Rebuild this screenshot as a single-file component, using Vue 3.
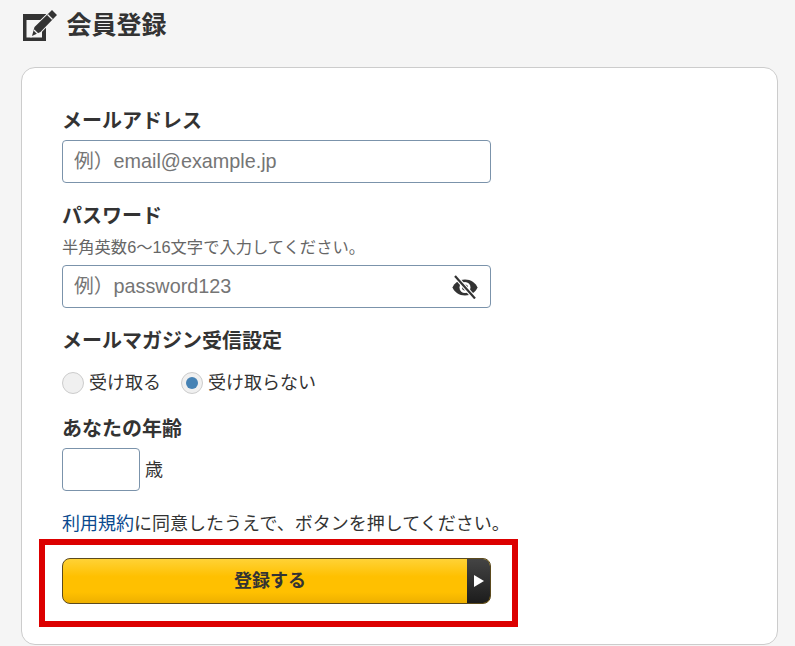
<template>
  <div class="page">
    <!-- タイトル -->
    <h1 class="title">
      <svg class="title-icon" width="36" height="32" viewBox="0 0 36 32">
        <path fill-rule="evenodd" d="M2 5H25V32H2zM5.500 11V28.500H21V11z" fill="#333" />
        <path d="M11 27 13.500 18 29 3 31 1 36 6 34 8 19.500 23z" fill="#333" stroke="#f5f5f5" stroke-width="2" paint-order="stroke" />
        <path d="M13 21 17 25" stroke="#f5f5f5" stroke-width="1.200" />
        <path d="M26.500 5.500 31.500 10.500" stroke="#f5f5f5" stroke-width="1.200" />
      </svg>
      会員登録
    </h1>

    <form class="card" @submit.prevent>
      <div class="field">
        <label class="label" for="email">メールアドレス</label>
        <input id="email" class="input" type="text" placeholder="例）email@example.jp" />
      </div>

      <div class="field">
        <label class="label" for="password">パスワード</label>
        <p class="hint">半角英数6〜16文字で入力してください。</p>
        <div class="password-wrap">
          <input id="password" class="input" type="text" placeholder="例）password123" />
          <svg class="eye" width="28" height="24" viewBox="0 0 28 24">
            <path d="M14 4.500C8 4.500 3.500 8 1.500 12.500 3.500 17 8 20.500 14 20.500S24.500 17 26.500 12.500C24.500 8 20 4.500 14 4.500z" fill="#333" />
            <circle cx="14" cy="12.500" r="5.500" fill="#fff" />
            <circle cx="14" cy="12.500" r="3" fill="#333" />
            <path d="M4.500 1.500 23.500 23" stroke="#fff" stroke-width="4.500" />
            <path d="M4 1 24 23.500" stroke="#333" stroke-width="2.200" />
          </svg>
        </div>
      </div>

      <div class="field radio-field">
        <span class="label">メールマガジン受信設定</span>
        <div class="radios">
          <label class="radio" v-for="option in options" :key="option">
            <span class="radio-dot" :class="{ checked: option === mailmag }"></span>
            {{ option }}
          </label>
        </div>
      </div>

      <div class="field">
        <label class="label" for="age">あなたの年齢</label>
        <div class="age-row">
          <input id="age" class="input age" type="text" />
          <span class="age-unit">歳</span>
        </div>
      </div>

      <p class="agree"><a href="#">利用規約</a>に同意したうえで、ボタンを押してください。</p>

      <!-- 登録ボタン -->
      <div class="submit-wrap">
        <button type="submit" class="submit">
          登録する
          <span class="submit-arrow"></span>
        </button>
        <div class="highlight"></div>
      </div>
    </form>
  </div>
</template>

<script setup>
import { ref } from 'vue'

const options = ['受け取る', '受け取らない']
const mailmag = ref('受け取らない')
</script>

<style>
html,
body {
  margin: 0;
  background: #f5f5f5;
}
</style>

<style scoped>
.page {
  height: 646px;
  overflow: hidden;
  padding: 9px 17px 0 21px;
  box-sizing: border-box;
  background: #f5f5f5;
  color: #333;
  font-family: "Liberation Sans", "Noto Sans CJK JP", sans-serif;
}

.title {
  display: flex;
  align-items: center;
  gap: 9.500px;
  height: 32px;
  margin: 0 0 26px;
  font-size: 25px;
  font-weight: bold;
  line-height: 32px;
}

.title-icon {
  flex: none;
}

.card {
  height: 578px;
  box-sizing: border-box;
  padding: 39px 40px 0;
  background: #fff;
  border: 1px solid #ccc;
  border-radius: 14px;
}

.field {
  margin-bottom: 19px;
}

.radio-field {
  margin-bottom: 20px;
}

.label {
  display: block;
  font-size: 20px;
  font-weight: bold;
  line-height: 28px;
  margin-bottom: 5px;
}

.hint {
  margin: 0 0 6px;
  font-size: 16.300px;
  line-height: 24px;
  color: #666;
}

.input {
  display: block;
  width: 429px;
  height: 43px;
  box-sizing: border-box;
  padding: 0 11px;
  border: 1px solid #7b93ab;
  border-radius: 4px;
  background: #fff;
  color: #333;
  font-family: inherit;
  font-size: 19.800px;
  outline: none;
}

.input::placeholder {
  color: #757575;
}

.password-wrap {
  position: relative;
  width: 429px;
}

.eye {
  position: absolute;
  right: 12px;
  top: 10px;
}

.radios {
  display: flex;
  gap: 20px;
  margin-top: 16px;
}

.radio {
  display: flex;
  align-items: center;
  gap: 5px;
  font-size: 18px;
  line-height: 24px;
}

.radio-dot {
  position: relative;
  width: 22px;
  height: 22px;
  box-sizing: border-box;
  border: 1px solid #ccc;
  border-radius: 50%;
  background: #f0f0f0;
}

.radio-dot.checked::after {
  content: "";
  position: absolute;
  left: 4px;
  top: 4px;
  width: 12px;
  height: 12px;
  border-radius: 50%;
  background: #4682b4;
}

.age-row {
  display: flex;
  align-items: center;
  gap: 5px;
}

.age {
  width: 78px;
}

.age-unit {
  padding-bottom: 3px;
  font-size: 18px;
}

.agree {
  margin: 20px 0 0;
  font-size: 18px;
  line-height: 26px;
}

.agree a {
  color: #0b4a8f;
  text-decoration: none;
}

.submit-wrap {
  position: relative;
  width: 429px;
  margin-top: 21px;
}

.submit {
  position: relative;
  display: block;
  width: 429px;
  height: 46px;
  padding: 0 13px 5px 0;
  overflow: hidden;
  border: 1px solid #5b4a1e;
  border-radius: 8px;
  background: linear-gradient(#ffd236, #ffc000 40%, #ffc000 75%, #eeb000);
  color: #333;
  font-family: inherit;
  font-size: 18px;
  font-weight: bold;
}

.submit-arrow {
  position: absolute;
  right: 0;
  top: 0;
  bottom: 0;
  width: 23px;
  background: linear-gradient(#444, #1c1c1c);
}

.submit-arrow::after {
  content: "";
  position: absolute;
  left: 7px;
  top: 16px;
  border-left: 10px solid #fff;
  border-top: 6px solid transparent;
  border-bottom: 6px solid transparent;
}

/* 赤枠の強調表示 */
.highlight {
  position: absolute;
  left: -23px;
  top: -19px;
  width: 479px;
  height: 88px;
  box-sizing: border-box;
  border: 6px solid #dc0000;
  pointer-events: none;
}
</style>
